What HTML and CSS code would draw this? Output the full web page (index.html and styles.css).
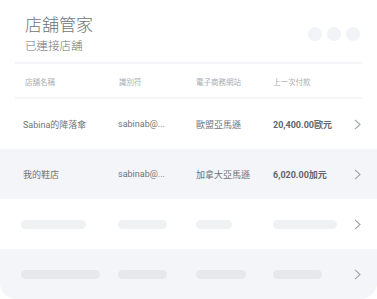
FILE: index.html
```html
<!DOCTYPE html>
<html lang="zh-Hant">
<head>
<meta charset="utf-8">
<title>店舖管家</title>
<link rel="stylesheet" href="styles.css">
</head>
<body>
<div class="card">
  <div class="top">
    <div class="titles">
      <div class="title">店舖管家</div>
      <div class="subtitle">已連接店舖</div>
    </div>
    <div class="dots"><span class="dot"></span><span class="dot"></span><span class="dot"></span></div>
  </div>
  <div class="thead">
    <div>店舖名稱</div>
    <div>識別符</div>
    <div>電子商務網站</div>
    <div>上一次付款</div>
  </div>
  <div class="row">
    <div class="cell">Sabina的降落傘</div>
    <div class="cell">sabinab@...</div>
    <div class="cell">歐盟亞馬遜</div>
    <div class="cell amount">20,400.00歐元</div>
    <svg class="chev" width="7" height="11" viewBox="0 0 7 11"><path d="M1 0.8 L6 5.5 L1 10.2" fill="none" stroke="#a0a3a8" stroke-width="1.1"/></svg>
  </div>
  <div class="row alt">
    <div class="cell">我的鞋店</div>
    <div class="cell">sabinab@...</div>
    <div class="cell">加拿大亞馬遜</div>
    <div class="cell amount">6,020.00加元</div>
    <svg class="chev" width="7" height="11" viewBox="0 0 7 11"><path d="M1 0.8 L6 5.5 L1 10.2" fill="none" stroke="#a0a3a8" stroke-width="1.1"/></svg>
  </div>
  <div class="row">
    <div class="cell"><span class="bar first w65"></span></div>
    <div class="cell"><span class="bar w49"></span></div>
    <div class="cell"><span class="bar w36"></span></div>
    <div class="cell"><span class="bar w64"></span></div>
    <svg class="chev" width="7" height="11" viewBox="0 0 7 11"><path d="M1 0.8 L6 5.5 L1 10.2" fill="none" stroke="#a0a3a8" stroke-width="1.1"/></svg>
  </div>
  <div class="row alt last">
    <div class="cell"><span class="bar first w79"></span></div>
    <div class="cell"><span class="bar w49"></span></div>
    <div class="cell"><span class="bar w50"></span></div>
    <div class="cell"><span class="bar w49"></span></div>
    <svg class="chev" width="7" height="11" viewBox="0 0 7 11"><path d="M1 0.8 L6 5.5 L1 10.2" fill="none" stroke="#a0a3a8" stroke-width="1.1"/></svg>
  </div>
</div>
</body>
</html>
```
FILE: styles.css
```css
* { box-sizing: border-box; }
html, body { margin: 0; padding: 0; background: #ffffff; }
body {
  font-family: Roboto, "Noto Sans CJK TC", sans-serif;
  color: #72767b;
}
.card {
  width: 377px;
  height: 299px;
  background: #ffffff;
  border-radius: 16px;
  overflow: hidden;
}
.top {
  height: 62px;
  padding: 15px 17px 0 25px;
  display: flex;
  justify-content: space-between;
  align-items: flex-start;
}
.title {
  font-size: 17px;
  line-height: 21px;
  font-weight: 300;
  color: #6f7277;
}
.subtitle {
  font-size: 11.5px;
  line-height: 16px;
  margin-top: 2px;
  font-weight: 300;
  color: #6f7277;
}
.dots {
  display: flex;
  gap: 5px;
  margin-top: 12px;
}
.dot {
  width: 14px;
  height: 14px;
  border-radius: 50%;
  background: #f2f3f7;
}
.thead {
  margin: 0 15px;
  height: 37px;
  border-top: 2px solid #f4f5f9;
  border-bottom: 2px solid #f4f5f9;
  padding: 1px 0 0 10px;
  display: grid;
  grid-template-columns: 94px 77px 77px 1fr;
  align-items: center;
  font-size: 7.5px;
  color: #a9adb4;
}
.row {
  height: 50px;
  padding: 0 16px 0 23px;
  display: grid;
  grid-template-columns: 95px 78px 77px 1fr 7px;
  align-items: center;
  font-size: 9px;
  color: #707479;
}
.row:first-of-type { height: 49px; }
.row.alt { background: #f4f5f8; }
.row.last { height: 51px; }
.amount { font-weight: 700; color: #62666b; }
.chev { display: block; }
.bar {
  display: block;
  height: 9px;
  border-radius: 5px;
  background: #f0f1f3;
}
.row.alt .bar { background: #e7e8eb; }
.bar.first { margin-left: -2px; }
.w36 { width: 36px; }
.w49 { width: 49px; }
.w50 { width: 50px; }
.w64 { width: 64px; }
.w65 { width: 65px; }
.w79 { width: 79px; }
```
